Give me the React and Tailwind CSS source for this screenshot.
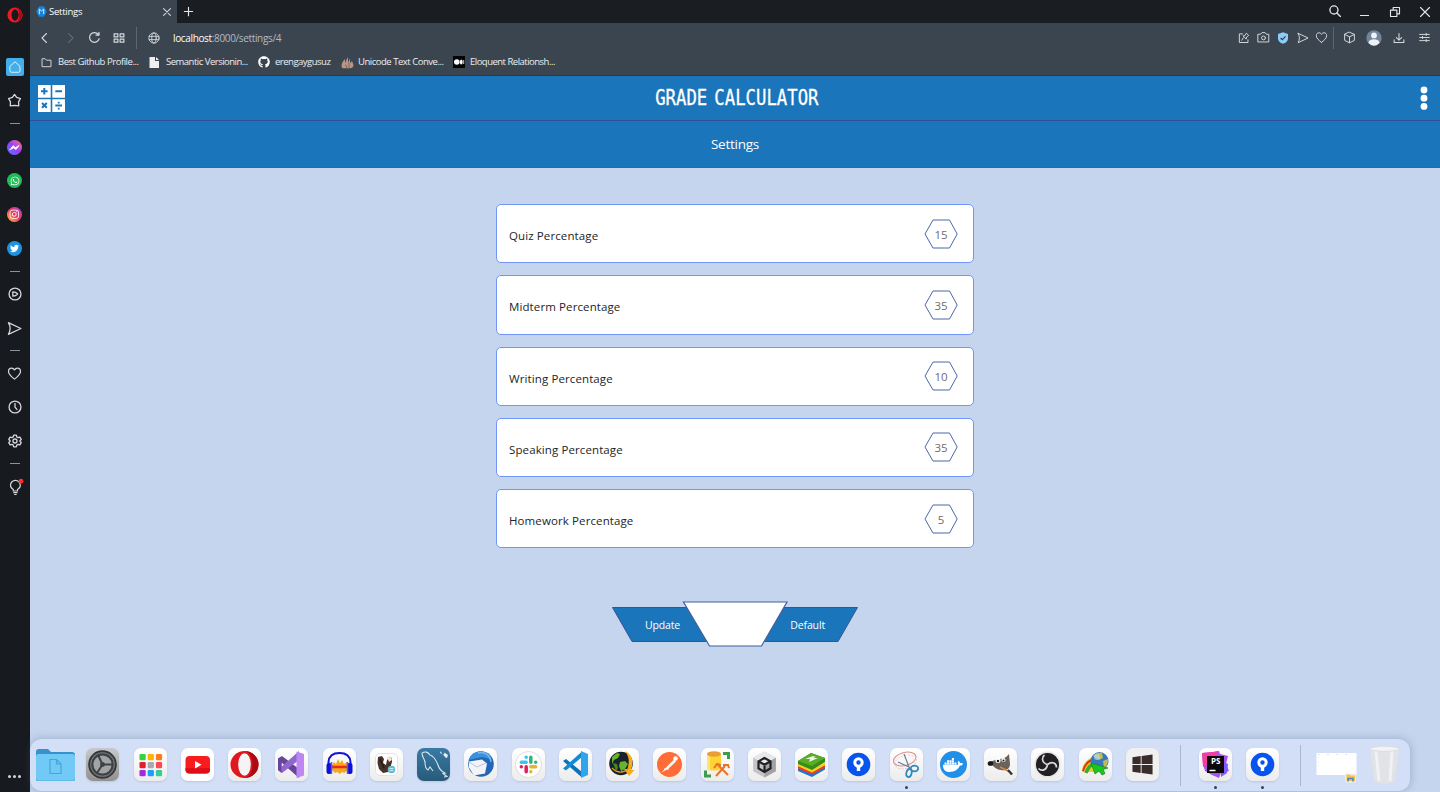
import React from "react";
import {
  FaGithub, FaTwitter, FaWhatsapp, FaInstagram, FaDocker, FaWindows,
} from "react-icons/fa6";

/* ---------- small line icon helper ---------- */
const Line = ({ size = 14, w = 1.2, children, className = "text-[#d5d7da]" }) => (
  <svg width={size} height={size} viewBox="0 0 16 16" fill="none" stroke="currentColor" strokeWidth={w} strokeLinecap="round" strokeLinejoin="round" className={className}>
    {children}
  </svg>
);
const heart = "M8 14C5 11.6 1.6 9 1.6 5.8C1.6 3.6 3 2.2 4.9 2.2C6.3 2.2 7.4 3 8 4.2C8.6 3 9.7 2.2 11.1 2.2C13 2.2 14.4 3.6 14.4 5.8C14.4 9 11 11.6 8 14Z";
const send = "M1.5 1.8L14.8 8L1.5 14.2C3.8 10.4 3.8 5.6 1.5 1.8Z";

/* ---------- sidebar ---------- */
const Dash = () => <span className="h-px w-[10px] bg-[#8b929b]" />;
const Badge = ({ className, children }) => (
  <span className={"flex size-[15px] items-center justify-center rounded-full text-white " + className}>{children}</span>
);

function Sidebar() {
  return (
    <aside className="flex h-full w-[30px] shrink-0 flex-col items-center bg-[#171a1f] pr-px">
      <div className="flex h-[30px] w-full items-center justify-center">
        <svg width="16" height="16" viewBox="0 0 16 16">
          <ellipse cx="8" cy="8" rx="7.6" ry="7.6" fill="#f01a24" />
          <path d="M8 .4a7.6 7.6 0 0 1 0 15.2a5 5 0 0 0 3.2-7.6A5 5 0 0 0 8 .4z" fill="#a60d1b" />
          <ellipse cx="8" cy="8" rx="3.5" ry="5.7" fill="#171a1f" />
        </svg>
      </div>
      <div className="h-[20px]" />
      <div className="flex h-[34px] items-center">
        <span className="flex size-[18px] items-center justify-center rounded-[2px] bg-[#42aeea]">
          <Line size={14} w={1.1} className="text-[#e4f5ff]"><path d="M2.3 7.2L8 2l5.7 5.2v5.3a1.5 1.5 0 0 1-1.500 1.500H3.800a1.500 1.500 0 0 1-1.500-1.500z" /></Line>
        </span>
      </div>
      <div className="flex h-[33.500px] items-center">
        <Line size={15} w={1.4}><path d="M8 1.600l2.300 3 4.100 1.300-2.100 3.500.2 4.300-4.500-.4-4.500.4.2-4.300-2.100-3.500 4.100-1.300z" /></Line>
      </div>
      <div className="flex h-[12.500px] items-center"><Dash /></div>
      <div className="flex h-[34px] items-center"><Badge className="bg-linear-to-bl from-[#ff5f6d] via-[#a033ff] to-[#0078ff]">
        <svg width="15" height="15" viewBox="0 0 15 15"><path d="M2.600 10l3.500-4.400 2.300 1.800 3.800-2-3.200 4.300-2.400-1.700z" fill="#fff" stroke="#fff" strokeWidth=".6" /></svg>
      </Badge></div>
      <div className="flex h-[33.500px] items-center"><Badge className="bg-[#20bd57]"><FaWhatsapp size={10} /></Badge></div>
      <div className="flex h-[33.500px] items-center"><Badge className="bg-linear-to-tr from-[#ffc12e] via-[#f02f5c] to-[#9b35dd]"><FaInstagram size={10.5} /></Badge></div>
      <div className="flex h-[34px] items-center"><Badge className="bg-[#1b95e0]"><FaTwitter size={9} /></Badge></div>
      <div className="flex h-[12px] items-center"><Dash /></div>
      <div className="flex h-[34px] items-center">
        <Line size={14} w={1.500}><circle cx="8" cy="8" r="6.800" /><path d="M5.500 5.500c2.200 0 4.200.8 5.500 2.500c-1.300 1.700-3.300 2.500-5.500 2.500z" /></Line>
      </div>
      <div className="flex h-[34px] items-center"><Line size={15} w={1.400}><path d={send} /></Line></div>
      <div className="flex h-[11px] items-center"><Dash /></div>
      <div className="flex h-[34px] items-center"><Line size={15} w={1.300}><path d={heart} /></Line></div>
      <div className="flex h-[34px] items-center"><Line size={14} w={1.500}><circle cx="8" cy="8" r="6.800" /><path d="M8 4v4.200l2.200 2.600" /></Line></div>
      <div className="flex h-[34px] items-center">
        <Line size={14} w={1.500}>
          <path d="M6.500 1.300h3l.5 2 1.600.9 2-.6 1.500 2.600-1.500 1.400v.8l1.500 1.400-1.500 2.600-2-.6-1.600.9-.5 2h-3l-.5-2-1.600-.9-2 .6L.9 9.800l1.500-1.400v-.8L.9 6.200l1.500-2.600 2 .6L6 3.300z" />
          <circle cx="8" cy="8" r="2.300" />
        </Line>
      </div>
      <div className="flex h-[11.500px] items-center"><Dash /></div>
      <div className="flex h-[34px] items-center pl-px">
        <svg width="18" height="18" viewBox="0 0 18 18" fill="none" stroke="#d5d7da" strokeWidth="1.200">
          <path d="M7.300 13v-1.500c-1.600-.9-2.800-2.300-2.800-4.300a4.900 4.900 0 0 1 9.800 0c0 2-1.200 3.400-2.800 4.300V13z" />
          <path d="M7.300 14.700h4.200M8.200 16.500h2.400" />
          <circle cx="15" cy="3.200" r="2.400" fill="#ff2d2d" stroke="none" />
        </svg>
      </div>
      <div className="mt-auto flex h-[32px] items-center gap-[2px]">
        <span className="size-[3px] rounded-full bg-[#d5d7da]" />
        <span className="size-[3px] rounded-full bg-[#d5d7da]" />
        <span className="size-[3px] rounded-full bg-[#d5d7da]" />
      </div>
    </aside>
  );
}

/* ---------- browser chrome ---------- */
function TabBar() {
  return (
    <div className="flex h-[23px] shrink-0 bg-[#1a1d21]">
      <div className="flex w-[147px] items-center bg-[#3b4550] pl-[6px]">
        <svg width="11" height="11" viewBox="0 0 11 11">
          <path d="M3 .3h5l2.800 5.200L8 10.700H3L.2 5.500z" fill="#1583d8" />
          <path d="M3.300 8.200V3l2.200 2 2.200-2v5.200" fill="none" stroke="#cfe8fb" strokeWidth="1" />
        </svg>
        <span className="ml-[2px] pt-[2px] text-[9.500px] tracking-[-0.250px] text-white">Settings</span>
        <Line size={10} w={1.700} className="mr-[5px] ml-auto text-[#d5d7da]"><path d="M2.500 2.500l11 11M13.500 2.500l-11 11" /></Line>
      </div>
      <div className="flex items-center pl-[6px]"><Line size={11} w={1.700} className="text-[#e5e7ea]"><path d="M8 2v12M2 8h12" /></Line></div>
      <div className="ml-auto flex items-center pr-[9px]">
        <Line size={14} w={1.500} className="mr-[18px] mb-[2px] text-[#e5e7ea]"><circle cx="6.800" cy="6.800" r="4.600" /><path d="M10.200 10.200l4 4" /></Line>
        <span className="mt-[8px] mr-[20px] h-px w-[9px] bg-[#e5e7ea]" />
        <Line size={12} w={1.500} className="mr-[18px] text-[#e5e7ea]"><path d="M2 5.500h8.500V14H2zM5.500 5V2H14v8.500h-3" /></Line>
        <Line size={12} w={1.500} className="text-[#e5e7ea]"><path d="M2 2l12 12M14 2L2 14" /></Line>
      </div>
    </div>
  );
}

function Toolbar() {
  return (
    <div className="flex h-[29px] shrink-0 items-center pl-[9px]">
      <Line size={12} w={1.500}><path d="M10 2L4 8l6 6" /></Line>
      <Line size={12} w={1.400} className="ml-[13px] text-[#6b747e]"><path d="M6 2l6 6-6 6" /></Line>
      <Line size={13} w={1.500} className="ml-[12px] text-[#d5d7da]"><path d="M13.700 9.500A6 6 0 1 1 12.500 4M13.500 1.800v3.400h-3.600" /></Line>
      <Line size={12} w={1.600} className="ml-[12px] text-[#d5d7da]"><path d="M1.500 2.500h5v4h-5zM9.500 2.500h5v4h-5zM1.500 9.500h5v4h-5zM9.500 9.500h5v4h-5z" /></Line>
      <span className="ml-[11px] h-[22px] w-px bg-[#5e6770]" />
      <Line size={12} w={1.200} className="ml-[11px] text-[#d5d7da]"><circle cx="8" cy="8" r="6.800" /><path d="M1.500 5.800h13M1.500 10.200h13" /><ellipse cx="8" cy="8" rx="3" ry="6.800" /></Line>
      <span className="ml-[13px] pt-px text-[10px] tracking-[-0.350px] text-[#b4bac1]"><span className="text-white">localhost</span>:8000/settings/4</span>
      <div className="ml-auto flex items-center pr-[10px]">
        <Line size={12} w={1.300}><path d="M6 2.500H1.800V14h11.500v-3.500M5 11l2-3M7 5.500l4 4 .3-2.600 3-2.300-3.200-3-2 3z" /></Line>
        <Line size={13} w={1.200} className="ml-[7px] text-[#d5d7da]"><path d="M1.500 4h3L6 2h4l1.500 2h3v9.500h-13z" /><circle cx="8" cy="8.500" r="2.400" /></Line>
        <svg width="12" height="12" viewBox="0 0 12 12" className="ml-[7px]"><path d="M6 .3l5 1.600v4.300c0 2.800-2 4.600-5 5.500c-3-.9-5-2.700-5-5.500V1.900z" fill="#8bcdf8" /><path d="M3.600 6l1.700 1.700 3.200-3.300" fill="none" stroke="#33414e" strokeWidth="1.200" /></svg>
        <Line size={12} w={1.300} className="ml-[8px] text-[#d5d7da]"><path d={send} /></Line>
        <Line size={13} w={1.200} className="ml-[6px] text-[#d5d7da]"><path d={heart} /></Line>
        <span className="ml-[5px] h-[22px] w-px bg-[#5e6770]" />
        <Line size={13} w={1.200} className="ml-[9px] text-[#d5d7da]"><path d="M8 1.500l6 2.700v7.300L8 14.500l-6-3V4.200zM2 4.200l6 3 6-3M8 7.200v7.300" /></Line>
        <svg width="16" height="16" viewBox="0 0 16 16" className="ml-[10px]">
          <circle cx="8" cy="8" r="7.700" fill="#73839a" /><circle cx="8" cy="5.400" r="2.900" fill="#eef1f5" />
          <path d="M2.400 12.800c.6-2.600 2.800-3.500 5.600-3.500s5 .9 5.600 3.500A7.700 7.700 0 0 1 8 15.700a7.700 7.700 0 0 1-5.600-2.900z" fill="#eef1f5" />
        </svg>
        <Line size={12} w={1.400} className="ml-[11px] text-[#d5d7da]"><path d="M8 2v8.500M4.500 7.500L8 10.800l3.500-3.300M1.500 10.500v3.500h13v-3.500" /></Line>
        <Line size={11} w={1.400} className="ml-[14px] text-[#d5d7da]"><path d="M1 3.500h14M1 8h14M1 12.500h14M10.500 2v3M5 6.500v3M10.500 11v3" /></Line>
      </div>
    </div>
  );
}

function Bookmark({ icon, label, className }) {
  return (
    <div className={"flex shrink-0 items-center " + className}>
      <span className="flex w-[17px] shrink-0 items-center">{icon}</span>
      <span className="pt-px text-[9.500px] whitespace-nowrap text-[#eceef0]">{label}</span>
    </div>
  );
}

function Bookmarks() {
  return (
    <div className="flex h-[24px] shrink-0 items-center border-b border-[#2b3560] pb-[3px] pl-[11px]">
      <Bookmark className="w-[108px] tracking-[-0.460px]" label="Best Github Profile..." icon={<Line size={11} w={1.400}><path d="M1.500 13.500v-11h4.500l2 2.200h6.500v8.800z" /></Line>} />
      <Bookmark className="w-[109px] tracking-[-0.500px]" label="Semantic Versionin..." icon={<svg width="10" height="11" viewBox="0 0 10 11"><path d="M.5 0H6v4h4v7H.5z" fill="#eee" /><path d="M7 0l3 3H7z" fill="#eee" /></svg>} />
      <Bookmark className="w-[83px] tracking-[-0.500px]" label="erengaygusuz" icon={<FaGithub size={12} className="text-white" />} />
      <Bookmark className="w-[112px] tracking-[-0.480px]" label="Unicode Text Conve..." icon={<svg width="13" height="13" viewBox="0 0 13 13"><path d="M.5 10c0-3 1.500-5 3.500-7v4L6.500 1.500l.5.500v5L9 2.300v5L11 5l1.500 4c0 2-1.500 3.300-4 3.300H3C1.500 12.300.5 11.500.5 10z" fill="#b89683" /><path d="M4.500 8.500l1.500 3.500M8 7v5" stroke="#695248" strokeWidth=".7" /></svg>} />
      <Bookmark className="w-[110px] tracking-[-0.510px]" label="Eloquent Relationsh..." icon={<svg width="12" height="12" viewBox="0 0 12 12"><path d="M0 0h12v12H0z" fill="#020305" /><circle cx="3.800" cy="6" r="2.800" fill="#fff" /><ellipse cx="8.300" cy="6" rx="1.400" ry="2.500" fill="#fff" /><path d="M10.700 4v4" stroke="#fff" strokeWidth=".8" /></svg>} />
    </div>
  );
}

/* ---------- page ---------- */
const settings = [
  ["Quiz Percentage", 15],
  ["Midterm Percentage", 35],
  ["Writing Percentage", 10],
  ["Speaking Percentage", 35],
  ["Homework Percentage", 5],
];

function PageHeader() {
  return (
    <header className="shrink-0 bg-[#1b75bb] text-white">
      <div className="flex h-[45px] items-center justify-between border-b border-[#334e94] px-[8px]">
        <svg width="27" height="27" viewBox="0 0 27 27">
          <path d="M0 0h12.700v12.700H0zM14.300 0H27v12.700H14.300zM0 14.300h12.700V27H0zM14.300 14.300H27V27H14.300z" fill="#fff" />
          <path d="M6.300 3v6.600M3 6.300h6.600M17.300 6.300H24M4 18l4.800 4.800M8.800 18L4 22.800M17.300 20.600H24" stroke="#1b75bb" strokeWidth="2" fill="none" />
          <path d="M19.800 16.700h1.800v1.800h-1.800zM19.800 22.800h1.800v1.800h-1.800z" fill="#1b75bb" />
        </svg>
        <h1 className="origin-center scale-x-[0.840] pr-[8px] font-['DejaVu_Sans_Mono',monospace] text-[20.600px] leading-none whitespace-nowrap [-webkit-text-stroke:0.300px_white] [word-spacing:-4px]">GRADE CALCULATOR</h1>
        <svg width="16" height="26" viewBox="0 0 16 26" fill="#fff"><circle cx="8" cy="5" r="3.400" /><circle cx="8" cy="13.200" r="3.400" /><circle cx="8" cy="21.400" r="3.400" /></svg>
      </div>
      <div className="flex h-[47px] items-center justify-center border-b border-[#2f65ab] text-[13.500px] tracking-[-0.250px]"><span className="pt-px">Settings</span></div>
    </header>
  );
}

function SettingRow({ label, value }) {
  return (
    <div className="flex h-[59.250px] items-center justify-between rounded-[5px] border border-[#7296f7] bg-white pr-[15px] pl-[12px]">
      <span className="pt-[4px] text-[11.500px] tracking-[0.110px] text-[#212529]">{label}</span>
      <span className="grid place-items-center">
        <svg width="34" height="30" viewBox="0 0 34 30" className="col-start-1 row-start-1"><path d="M9 1h16.500l7.700 14-7.700 14H9L1 15z" fill="#fff" stroke="#4a68a8" /></svg>
        <span className="col-start-1 row-start-1 pt-px text-[11.500px] text-[#6d6d6d]">{value}</span>
      </span>
    </div>
  );
}

function Actions() {
  return (
    <div className="mt-[52px] grid w-[248px] items-center self-center">
      <svg width="248" height="48" viewBox="0 0 248 48" className="col-start-1 row-start-1">
        <path d="M1.500 7.500h245L227 41.500H21z" fill="#1b75bb" stroke="#34549a" />
        <path d="M72.500 2H176L150.500 46H98.500z" fill="#fff" stroke="#44609f" strokeWidth="1.200" />
      </svg>
      <div className="col-start-1 row-start-1 flex justify-between px-[34px] pt-[3px] text-[10.500px] tracking-[-0.150px] text-white">
        <button>Update</button>
        <button>Default</button>
      </div>
    </div>
  );
}

/* ---------- dock ---------- */
const Art = ({ children }) => <svg width="33" height="33" viewBox="0 0 33 33" fill="none">{children}</svg>;
const gridColors = ["#35d33b", "#ffb300", "#ff7a1a", "#e2202c", "#a9a9ad", "#ff4655", "#a02be0", "#1ea0f5", "#30cf9c"];

const SourceTree = (
  <Art><circle cx="16.500" cy="16.500" r="11.800" fill="#0754ec" /><circle cx="16.500" cy="14.500" r="3.700" stroke="#fff" strokeWidth="3" /><path d="M16.500 18v5" stroke="#fff" strokeWidth="3.400" /></Art>
);

const art = {
  youtube: <Art><rect x="4.500" y="8" width="24.500" height="17.500" rx="4" fill="#f91c1c" /><path d="M4.500 20v1.500a4 4 0 0 0 4 4H25a4 4 0 0 0 4-4V20z" fill="#df0d16" /><path d="M14 13l6.500 3.700L14 20.400z" fill="#fff" /></Art>,
  apps: <Art>{gridColors.map((c, i) => <rect key={c} x={5.500 + (i % 3) * 8.200} y={6 + Math.floor(i / 3) * 8} width="6.200" height="6.200" rx="1.300" fill={c} />)}</Art>,
  opera: <Art><ellipse cx="16.500" cy="16.500" rx="14" ry="13.500" fill="#df1820" /><path d="M16.500 3a14 13.500 0 0 1 0 27c5-1 8-6.500 8-13.500s-3-12.500-8-13.500z" fill="#ac0b14" /><ellipse cx="16.500" cy="16.500" rx="6.300" ry="11.200" fill="#f5f4f4" /></Art>,
  vs: <Art><path d="M3 10.500L7 8l17 13v9L6.500 14.500v7L3 22z" fill="#68449b" /><path d="M3 22l4 3L24 12V3L3 22z" fill="#9167ce" /><path d="M3 10.500L6.500 9v16L3 22z" fill="#68449b" /><path d="M21.500 3.500L29 6v21.500L21.500 30z" fill="#bd86f3" /></Art>,
  audacity: <Art><path d="M9 17l2-3 2 2 2-5 2 4 2-3 2 4 3-2v9l-3 2-2-1-2 2-3-2-2 1-3-3z" fill="#f6a71a" /><path d="M9 19h15" stroke="#ee2b18" strokeWidth="2.600" /><path d="M5.500 17v-3C6 8 10.500 5 16.500 5S27 8 27.500 14v3" stroke="#1313d9" strokeWidth="2" /><rect x="3.500" y="15" width="5.500" height="11" rx="2.500" fill="#0b10dc" /><rect x="24" y="15" width="5.500" height="11" rx="2.500" fill="#0b10dc" /><path d="M8.500 14v12M24.500 14v12" stroke="#4d5bf2" strokeWidth="1.500" /></Art>,
  dbeaver: <Art><rect x="5.500" y="5.500" width="22" height="22" rx="4.500" fill="#fff" stroke="#e2e2e2" /><path d="M8 9l4-1 2 3-1 4 3 2 1-5 3-3 2 1 0 4-1 3 0 4-3 3-5 1-4-4-1.500-6z" fill="#46332b" /><path d="M17 9l4-1 1 4-3 2z" fill="#efe1d0" /><path d="M10 11l4 9" stroke="#2a201d" strokeWidth="2" /><circle cx="21.500" cy="21.500" r="3.800" fill="#63b9d3" /><path d="M19.500 20.500h4M19.500 22.500h4" stroke="#c3ebf3" /></Art>,
  mysql: <Art><path d="M5 5c3-2 6-1 8 2 4 1 6 5 8 10 1 4 3 6 7 8l-2 .5 4 3-3 .5M5 5c0 4 2 5 3 9 0 5 1 7 3 8l2-3 3 4" stroke="#d6e6ef" strokeWidth="1.100" /><path d="M24 3l1 3 2 .5.500-2L31 7l-1 3-1.500-.5-2.500-3-3-1.500z" fill="#e9eef2" /></Art>,
  thunderbird: <Art><circle cx="17" cy="16" r="12.800" fill="#2467b6" /><path d="M4.500 12C7 5 13 3 17.500 3.500c6 .5 9 4 10.500 8L18 9z" fill="#3b91dc" /><path d="M14 5c7-2 12 2 13 9" stroke="#7ab9ee" strokeWidth="1.500" /><path d="M5 13.500l13-2 5 4-2 10-11 2-5-8z" fill="#f2f4f8" /><path d="M5 14l8 5 9-4" stroke="#b9c5d8" /></Art>,
  slack: <Art><circle cx="16.500" cy="16.500" r="13" fill="#fff" stroke="#d6d6d6" strokeWidth=".8" /><g strokeWidth="3.500" strokeLinecap="round"><path d="M14.200 9.300v0M9.300 14.200h4.900" stroke="#36c5f0" /><path d="M18.800 9.300v4.900M23.700 14.200h0" stroke="#2eb67d" /><path d="M14.200 18.800v4.900M9.300 18.800h0" stroke="#e01e5a" /><path d="M18.800 18.800h4.900M18.800 23.700h0" stroke="#ecb22e" /></g></Art>,
  vscode: <Art><path d="M4 13l3-2 16 13v5.500z" fill="#0872ba" /><path d="M4 20.500l3 2L23 9V3.500z" fill="#128bd2" /><path d="M22 3l7 3v21l-7 3z" fill="#30a5ee" /></Art>,
  globe: <Art><circle cx="15" cy="15.500" r="11.800" fill="#18222c" /><path d="M6 9l5-4 3 1-2 4-4 2-2 4zM14 14l5-1 3 3-3 5-4 2-2-5z" fill="#67b32e" /><path d="M7 15l4 1 1 4-2 3z" fill="#43861f" /><path d="M19 3c7 3 9 10 6 19h3.500L23 28l-5-7h3.500c2-7 2-12-2.500-18z" fill="#f4ae1c" /><path d="M6 20c6 6 13 5 18-1" stroke="#e89c13" strokeWidth="1.300" /></Art>,
  postman: <Art><circle cx="16.500" cy="16.500" r="12.500" fill="#ff6c37" /><path d="M8.500 24.500l5.500-6 7-7 2 2-7.500 7z" fill="#fff" /><circle cx="22.500" cy="10.500" r="2.300" fill="#fff" /><path d="M11 21h5" stroke="#fff" /></Art>,
  database: <Art><path d="M6 6v15c2 2 12 2 14 0V6z" fill="#ffd332" /><path d="M6 6v15c1 1 2 1.200 3 1.400V6z" fill="#fbe37a" /><ellipse cx="13" cy="6" rx="7" ry="2.700" fill="#e89e38" /><path d="M22 5.500h5.500V11M4.500 22.500v5.500H10" stroke="#3e9b50" strokeWidth="3" /><path d="M15 28l9-10M17 17l10 10" stroke="#e8742c" strokeWidth="2" /><path d="M13 20l3-4 4 1M22 17l5 0 1 3" stroke="#e8742c" strokeWidth="2" /></Art>,
  unity: <Art><path d="M16.500 3.500l11.300 6.300v13.500L16.500 29.500 5.200 23.300V9.800z" fill="#c4c4c5" /><path d="M16.500 3.500l11.300 6.300-11.300 6.500L5.200 9.800z" fill="#e8e8e8" /><path d="M16.500 16.500l11.300-6.700v13.500l-11.300 6.200z" fill="#a2a3a5" /><path d="M16.500 10l6 3.300v7L16.500 24l-6-3.700v-7zM10.500 13.300l6 3.500 6-3.500M16.500 16.800V24" stroke="#202124" strokeWidth="2.200" /></Art>,
  layers: <Art><path d="M3 20l14 6 13-7v2.500L17 29 3 23z" fill="#1878cd" /><path d="M3 18l14 6 13-7v2.500L17 26.500 3 20.500z" fill="#ef3923" /><path d="M3 15.500l14 6 13-7V17l-13 7.500L3 18z" fill="#f6cf1d" /><path d="M3 13L16 5l14 5v4l-13 8L3 16z" fill="#358d18" /><path d="M3 13L16 5l14 5-13 8z" fill="#59ac28" /><path d="M10 11l8-3 3 1-3 1 5 0-9 4 1-3z" fill="#eaf7de" /></Art>,
  snip: <Art><g transform="rotate(-15 15 12)"><ellipse cx="15" cy="11" rx="11.500" ry="6.500" stroke="#dd8d90" strokeWidth="1.100" /><ellipse cx="15" cy="14" rx="11" ry="6.500" stroke="#eab9ba" strokeWidth=".7" strokeDasharray="2 1.500" /></g><path d="M14 6l5 13M8 14l13 6" stroke="#6c7f8d" strokeWidth="1.200" /><ellipse cx="24.500" cy="20.500" rx="3.700" ry="2.800" stroke="#3189bd" strokeWidth="1.800" /><ellipse cx="19" cy="25" rx="2.600" ry="4" transform="rotate(15 19 25)" stroke="#3189bd" strokeWidth="1.800" /></Art>,
  gimp: <Art><path d="M5 13c3 1 5-1 9-2 5 0 8-1 11-5l1 10c0 5-4 7-9 6-4 0-8-3-12-9z" fill="#6b625b" /><circle cx="14" cy="12.500" r="2.500" fill="#fff" /><circle cx="19.500" cy="12" r="2.100" fill="#fff" /><circle cx="14" cy="13" r="1.200" fill="#111" /><circle cx="19.500" cy="12.500" r="1" fill="#111" /><ellipse cx="6.500" cy="15.500" rx="2.800" ry="2.300" fill="#171717" /><path d="M16 19l8 4" stroke="#d7863f" strokeWidth="1.500" /><path d="M24 22l4 4.500" stroke="#33302f" strokeWidth="2.400" /></Art>,
  obs: <Art><circle cx="16.500" cy="16.500" r="12.300" fill="#211f22" stroke="#e5e5e5" strokeWidth="1.500" /><path d="M16 16.500C10 14 11 9 13.500 7M16.500 16.500c-1 6-6 7-9 4M16.500 16.500c5-4 9-1 9 3" stroke="#d8d8da" strokeWidth="1.700" /></Art>,
  idm: <Art><path d="M3 24C3 16 8 10 16 9l10 5c-5 0-9 3-11 10z" fill="#efcf25" /><path d="M4 23c2-7 6-11 12-12" stroke="#e02f22" strokeWidth="2" /><path d="M7 25c2-6 5-9 10-10" stroke="#37af2e" strokeWidth="3.500" /><circle cx="20.500" cy="13" r="9" fill="#3978bd" /><path d="M14 8c2-3 6-4 9-3l1 5-4 2zM24 13l5-2c0 4-1 7-4 9z" fill="#c6ba4a" /><circle cx="18" cy="9" r="3" fill="#afdaf6" opacity=".7" /><path d="M12 15l17 5-5 1.500 2 4-3 1.500-3-4-4 3z" fill="#1dc522" stroke="#138716" strokeWidth=".7" /></Art>,
};

const Tile = ({ children, className = "bg-linear-to-b from-white to-[#ececed]" }) => (
  <span className={"flex size-[33px] items-center justify-center overflow-hidden rounded-[7px] shadow-[0_1px_2px_rgba(70,90,130,0.180)] " + className}>{children}</span>
);

const Cell = ({ dot, children }) => (
  <div className="flex w-[47.250px] shrink-0 flex-col items-center pt-[9px]">
    {children}
    {dot && <span className="mt-[5px] size-[3px] rounded-full bg-[#39404d]" />}
  </div>
);

function Dock() {
  return (
    <div className="mt-auto mb-px flex h-[52px] w-[1380px] shrink-0 rounded-[12px] bg-[#d2dff6] pl-[2px] shadow-[0_0_9px_rgba(70,90,130,0.350)]">
      <Cell>
        <svg width="39" height="33" viewBox="0 0 39 33" fill="none">
          <path d="M0 4a3 3 0 0 1 3-3h9l3 3h21a3 3 0 0 1 3 3v4H0z" fill="#3692cc" />
          <rect x="0" y="6" width="39" height="27" rx="2.500" fill="#71c9f6" /><path d="M0 30.500a2.500 2.500 0 0 0 2.500 2.500h34a2.500 2.500 0 0 0 2.500-2.500" stroke="#4eaede" />
          <path d="M14 11.500h6.500l4.500 4.500v9.500H14zM20.500 11.500V16H25" stroke="#49a4d6" strokeWidth="1.200" />
        </svg>
      </Cell>
      <Cell><Tile className="bg-linear-to-b from-[#c6cacc] to-[#92918f]">
        <Art><circle cx="16.500" cy="16.500" r="13.300" fill="#898c8e" stroke="#333639" strokeWidth="2" /><circle cx="16.500" cy="16.500" r="10.200" fill="#a1a3a4" stroke="#3e4143" strokeWidth="2.200" /><circle cx="16.500" cy="16.500" r="12" stroke="#5c5f61" strokeWidth="1.500" strokeDasharray="1 1" /><path d="M16.500 16.500L12 7M16.500 16.500H27M16.500 16.500L11 25" stroke="#3e4143" strokeWidth="2" /><circle cx="16.500" cy="16.500" r="2.400" fill="#3e4143" /></Art>
      </Tile></Cell>
      <Cell><Tile>{art.apps}</Tile></Cell>
      <Cell><Tile className="bg-white">{art.youtube}</Tile></Cell>
      <Cell><Tile>{art.opera}</Tile></Cell>
      <Cell><Tile>{art.vs}</Tile></Cell>
      <Cell><Tile>{art.audacity}</Tile></Cell>
      <Cell><Tile>{art.dbeaver}</Tile></Cell>
      <Cell><Tile className="bg-linear-to-b from-[#397ba5] to-[#285a79]">{art.mysql}</Tile></Cell>
      <Cell><Tile>{art.thunderbird}</Tile></Cell>
      <Cell><Tile>{art.slack}</Tile></Cell>
      <Cell><Tile>{art.vscode}</Tile></Cell>
      <Cell><Tile>{art.globe}</Tile></Cell>
      <Cell><Tile>{art.postman}</Tile></Cell>
      <Cell><Tile>{art.database}</Tile></Cell>
      <Cell><Tile>{art.unity}</Tile></Cell>
      <Cell><Tile>{art.layers}</Tile></Cell>
      <Cell><Tile>{SourceTree}</Tile></Cell>
      <Cell dot><Tile>{art.snip}</Tile></Cell>
      <Cell><Tile><span className="flex size-[27px] items-center justify-center rounded-full bg-[#228fe8] text-white"><FaDocker size={20} /></span></Tile></Cell>
      <Cell><Tile>{art.gimp}</Tile></Cell>
      <Cell><Tile>{art.obs}</Tile></Cell>
      <Cell><Tile>{art.idm}</Tile></Cell>
      <Cell><Tile className="bg-[#f0f0f0]"><FaWindows size={23} className="text-[#3b2c2b]" /></Tile></Cell>
      <div className="flex w-[26px] shrink-0 items-center pl-[14px]"><span className="h-[41px] w-px bg-[#a9b8d2]" /></div>
      <Cell dot><Tile>
        <span className="grid place-items-center">
          <span className="col-start-1 row-start-1"><Art><path d="M3 5l11-1 6-1 1 3 8 2-2 8 3 7-8 2-2 5-7-3-7-4-2-7z" fill="#a753ee" /><path d="M3 5l11-1 6-1-9 13-7 3z" fill="#f43da1" /><path d="M22 13l7 3-1 9-6 4z" fill="#805bff" /><rect x="8" y="8" width="17" height="17" fill="#0a080d" /><path d="M10.500 22.500h6" stroke="#fff" strokeWidth="1.300" /></Art></span>
          <span className="col-start-1 row-start-1 pb-[7px] text-[8px] leading-none font-bold text-white">PS</span>
        </span>
      </Tile></Cell>
      <Cell dot><Tile>{SourceTree}</Tile></Cell>
      <div className="flex w-[26.800px] shrink-0 items-center pl-[13.500px]"><span className="h-[41px] w-px bg-[#a9b8d2]" /></div>
      <Cell>
        <svg width="41" height="35" viewBox="0 0 41 35" fill="none">
          <rect x=".5" y="5" width="40" height="22" fill="#fff" /><path d="M2 6.500h36" stroke="#ddd" strokeDasharray="2 7" strokeWidth=".8" /><path d="M2.500 9v12" stroke="#eee" strokeDasharray="1 3" />
          <rect x="29" y="25.500" width="11" height="9" rx="1" fill="#efeee9" /><path d="M30.500 26.500h3l1 1h4.500V33h-8.500z" fill="#f5c242" /><path d="M32 33.500v-3h5v3" stroke="#4d86be" strokeWidth="1.500" />
        </svg>
      </Cell>
      <Cell>
        <svg width="31" height="38" viewBox="0 0 31 38" fill="none" className="-mt-[2px]">
          <path d="M1 2.500L5 34c.3 2 4 3.500 10.500 3.500S25.700 36 26 34l4-31.500z" fill="#e1e3e7" /><path d="M7 5l3 30M23 5l-2 30" stroke="#f0f1f4" strokeWidth="3" />
          <ellipse cx="15.500" cy="2.800" rx="14.500" ry="2.500" fill="#f3f3f5" stroke="#d4d8de" strokeWidth=".7" />
        </svg>
      </Cell>
    </div>
  );
}

export default function App() {
  return (
    <div className="flex h-[792px] w-[1440px] overflow-hidden bg-[#c4d5ed] font-['Open_Sans','Noto_Sans',sans-serif]">
      <Sidebar />
      <div className="flex min-w-0 flex-1 flex-col">
        <TabBar />
        <div className="shrink-0 bg-[#3b4550]">
          <Toolbar />
          <Bookmarks />
        </div>
        <PageHeader />
        <main className="flex min-h-0 flex-1 flex-col">
          <section className="mt-[36px] flex w-[478px] flex-col gap-[12px] self-center">
            {settings.map(([label, value]) => <SettingRow key={label} label={label} value={value} />)}
          </section>
          <Actions />
          <Dock />
        </main>
      </div>
    </div>
  );
}
